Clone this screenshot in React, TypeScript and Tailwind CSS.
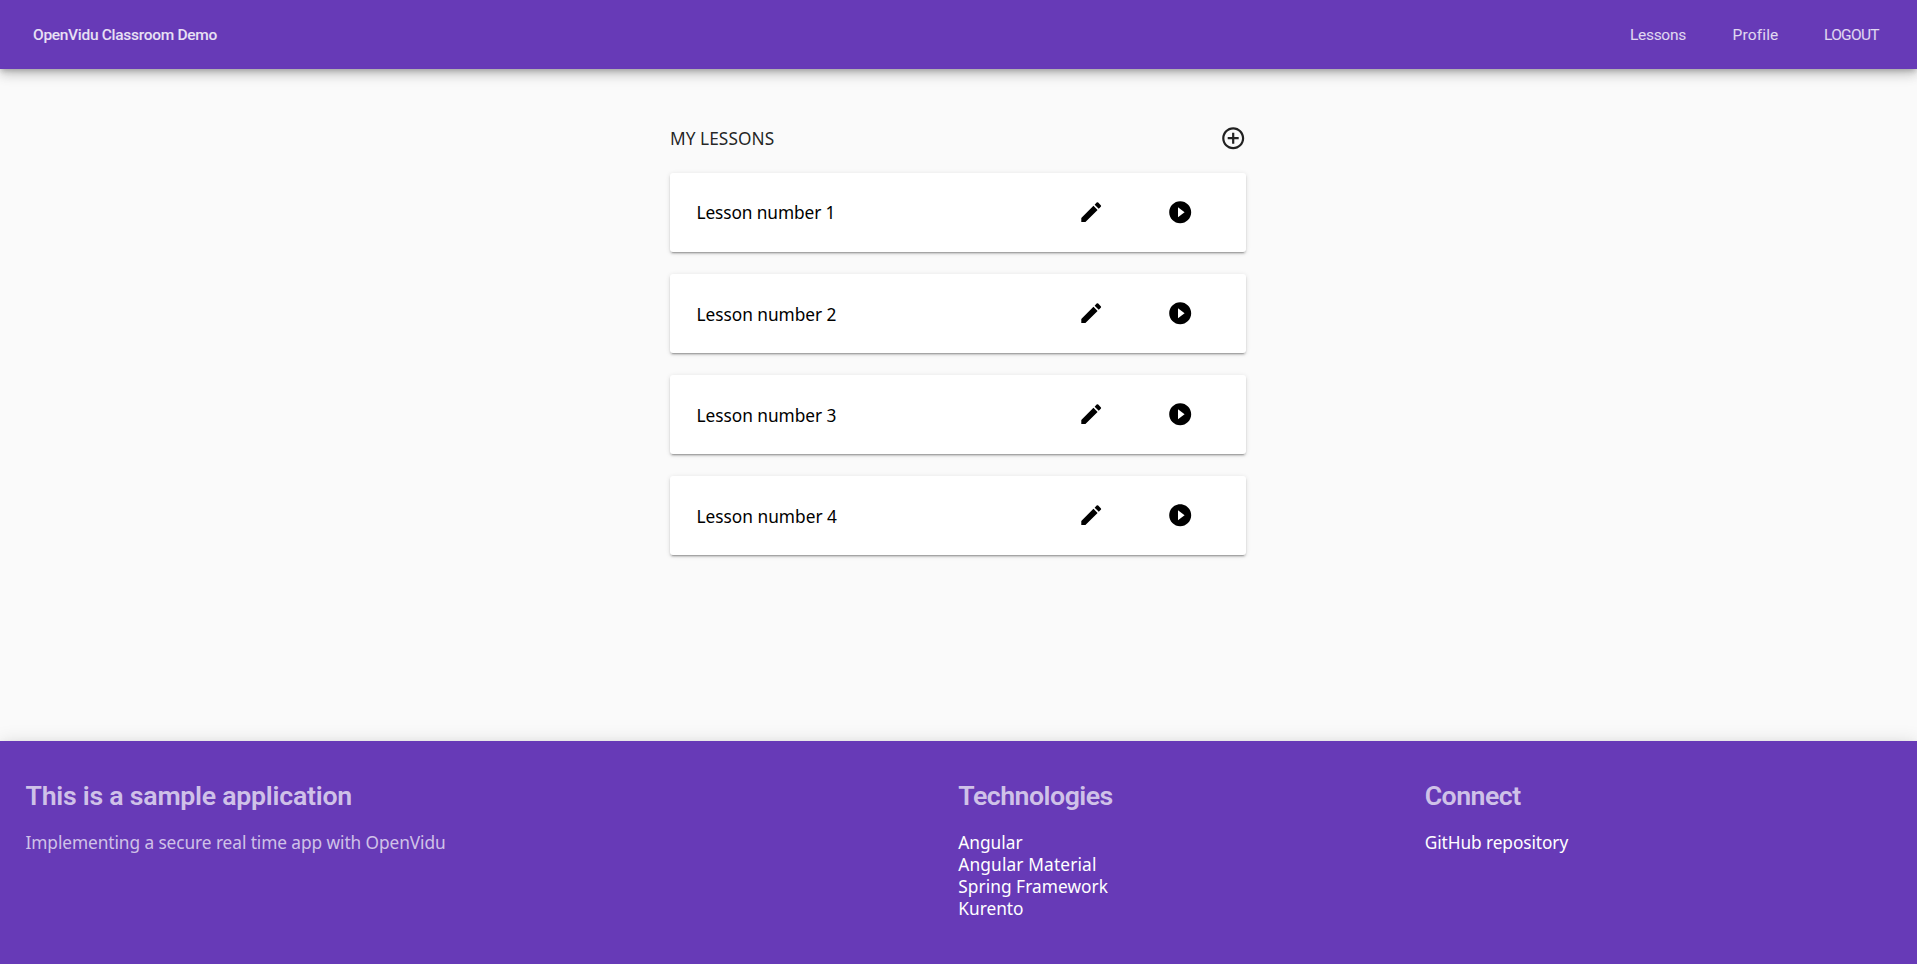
import { MdAddCircleOutline, MdEdit, MdPlayCircleFilled } from 'react-icons/md';

const lessons = [
  { id: 1, title: 'Lesson number 1', offset: 'pt-0 tracking-[-0.1px]' },
  { id: 2, title: 'Lesson number 2', offset: 'pt-[2px] tracking-[-0.03px]' },
  { id: 3, title: 'Lesson number 3', offset: 'pt-[2px] tracking-[-0.03px]' },
  { id: 4, title: 'Lesson number 4', offset: 'pt-[2px] tracking-normal' },
];

const technologies = [
  { name: 'Angular', spacing: 'tracking-normal' },
  { name: 'Angular Material', spacing: 'tracking-[0.15px]' },
  { name: 'Spring Framework', spacing: 'tracking-[0.05px]' },
  { name: 'Kurento', spacing: 'tracking-normal' },
];

function Header() {
  return (
    <header className="relative z-10 flex h-[69px] shrink-0 items-center justify-between bg-[#673ab7] pt-[2px] pl-[33px] font-['Roboto',sans-serif] text-[15.5px] text-white/85 shadow-[0_3px_5px_-1px_rgba(0,0,0,0.2),0_6px_10px_0_rgba(0,0,0,0.14),0_1px_18px_0_rgba(0,0,0,0.12)]">
      <a href="#" className="font-medium tracking-[-0.3px]">OpenVidu Classroom Demo</a>
      <nav className="flex text-white/80">
        <a href="#" className="w-[102.5px] tracking-[-0.3px]">Lessons</a>
        <a href="#" className="w-[91.5px] tracking-[0.15px]">Profile</a>
        <a href="#" className="w-[93px] tracking-[-0.7px]">LOGOUT</a>
      </nav>
    </header>
  );
}

function LessonCard({ title, offset }: { title: string; offset: string }) {
  return (
    <li className="flex h-[79px] items-center rounded-[3px] bg-white pr-[53px] pl-[26.5px] text-black shadow-[0_3px_1px_-2px_rgba(0,0,0,0.2),0_2px_2px_0_rgba(0,0,0,0.14),0_1px_5px_0_rgba(0,0,0,0.12)]">
      <span className={`flex-1 ${offset}`}>{title}</span>
      <div className="flex gap-[62.4px]">
        <button aria-label="Edit lesson"><MdEdit className="size-[26.4px]" /></button>
        <button aria-label="Start lesson"><MdPlayCircleFilled className="size-[26.4px]" /></button>
      </div>
    </li>
  );
}

function Footer() {
  return (
    <footer className="grid h-[223px] shrink-0 grid-cols-[2fr_1fr_1fr] bg-[#673ab7] pt-[39px] pr-[26px] pl-[25.5px] text-[17.3px] leading-[22px] text-white shadow-[0_3px_5px_-1px_rgba(0,0,0,0.2),0_6px_10px_0_rgba(0,0,0,0.14),0_1px_18px_0_rgba(0,0,0,0.12)]">
      <section>
        <h2 className="mb-5 font-['Roboto',sans-serif] text-[26.7px] leading-8 font-semibold tracking-[-0.25px] text-white/70">This is a sample application</h2>
        <p className="tracking-[-0.08px] text-white/70">Implementing a secure real time app with OpenVidu</p>
      </section>
      <section>
        <h2 className="mb-5 font-['Roboto',sans-serif] text-[26.7px] leading-8 font-semibold tracking-[-0.5px] text-white/70">Technologies</h2>
        <ul>
          {technologies.map((t) => (
            <li key={t.name}><a href="#" className={t.spacing}>{t.name}</a></li>
          ))}
        </ul>
      </section>
      <section>
        <h2 className="mb-5 font-['Roboto',sans-serif] text-[26.7px] leading-8 font-semibold tracking-[-0.5px] text-white/70">Connect</h2>
        <a href="#" className="tracking-[-0.08px]">GitHub repository</a>
      </section>
    </footer>
  );
}

export default function App() {
  return (
    <div className="flex h-screen flex-col overflow-hidden bg-[#fafafa] font-['Noto_Sans',sans-serif]">
      <Header />
      <main className="ml-[670px] w-[576px] flex-1 pt-[56px] text-[17.3px] leading-[22px]">
        <div className="mb-[22px] flex h-[26px] items-center justify-between text-black/87">
          <h1 className="pt-px tracking-[0.05px]">MY LESSONS</h1>
          <button aria-label="Add lesson"><MdAddCircleOutline className="size-[26.4px]" /></button>
        </div>
        <ul className="flex flex-col gap-[22px]">
          {lessons.map((l) => (
            <LessonCard key={l.id} title={l.title} offset={l.offset} />
          ))}
        </ul>
      </main>
      <Footer />
    </div>
  );
}
